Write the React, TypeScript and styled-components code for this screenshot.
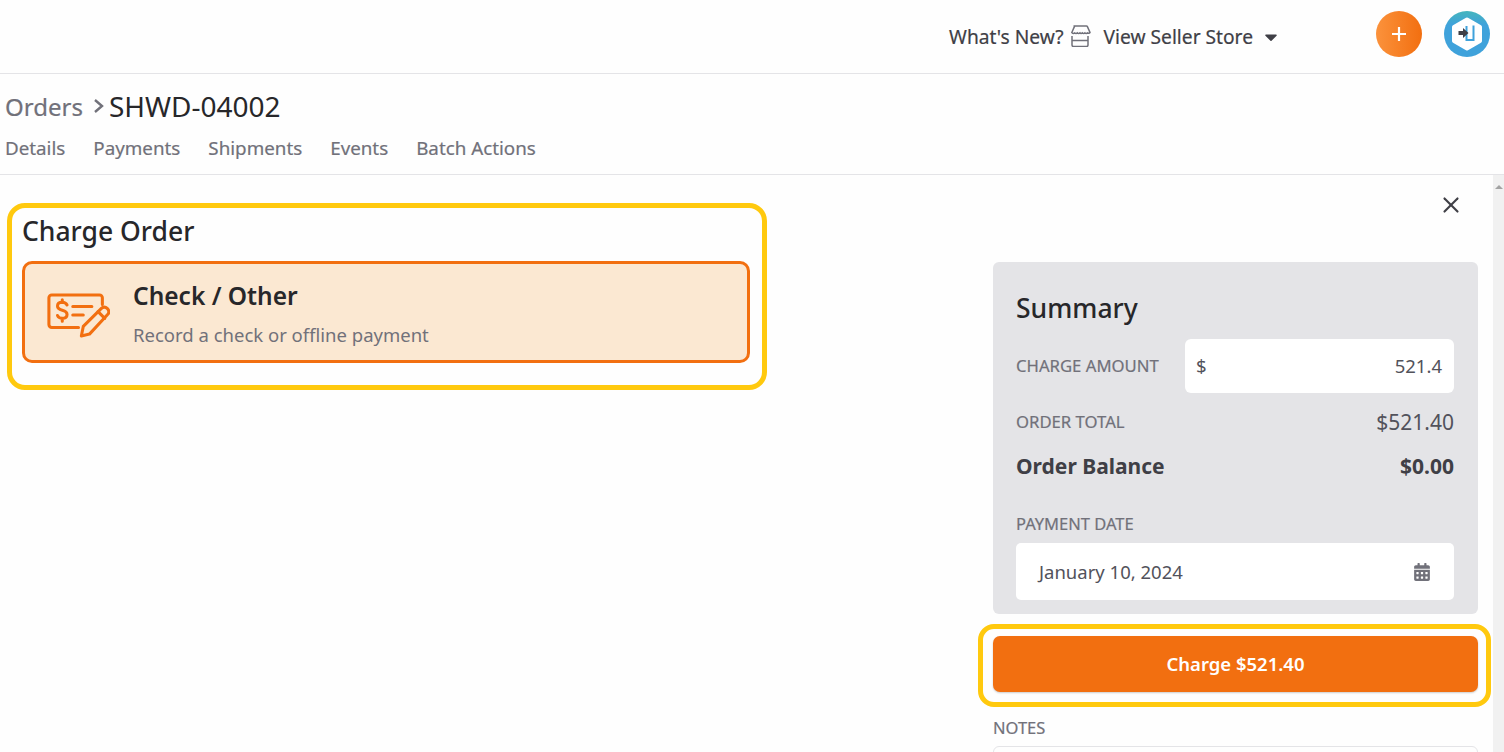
import { FaCalendarAlt, FaCaretDown } from "react-icons/fa";
import { X } from "lucide-react";
import styled, { createGlobalStyle } from "styled-components";

const GlobalStyle = createGlobalStyle`
  html, body {
    margin: 0;
    height: 100%;
    overflow: hidden;
    background: #fefefe;
    font-family: "Noto Sans", "Open Sans", sans-serif;
    color: #3f3f46;
  }
  * { box-sizing: border-box; }
`;

function StoreIcon() {
  return (
    <svg width="22" height="22" viewBox="0 0 22 22" fill="none" stroke="#71717a" strokeWidth="1.500">
      <path d="M4.500 1h13a1 1 0 0 1 .9.600L21 7.500c-.6.800-1.600 1-2.400.4-.8.700-2 .7-2.600 0-.8.700-2 .7-2.600 0-.8.700-2 .7-2.400 0-.8.700-2 .7-2.600 0-.8.700-2 .7-2.600 0-.8.600-2.300.4-3-.4l2.600-5.900a1 1 0 0 1 .9-.600z" />
      <path d="M3 11v9a1.500 1.500 0 0 0 1.500 1.500h13A1.500 1.500 0 0 0 19 20v-9M3 15.500h16" />
    </svg>
  );
}

function Logo() {
  return (
    <svg width="46" height="46" viewBox="0 0 46 46">
      <defs>
        <linearGradient id="ring" x1="0" y1="0" x2="0" y2="1">
          <stop offset="0" stopColor="#45b5bd" />
          <stop offset="0.3" stopColor="#3fa2db" />
          <stop offset="1" stopColor="#3fa2db" />
        </linearGradient>
      </defs>
      <circle cx="23" cy="23" r="23" fill="url(#ring)" />
      <path d="M23 8.500l13 7.500v14l-13 7.500L10 30V16z" fill="#fff" stroke="#fff" strokeWidth="4" strokeLinejoin="round" />
      <path d="M22.500 15v14h7V14.500" fill="none" stroke="#3fa2db" strokeWidth="2" />
      <path d="M14.500 20h4.500v-3l5.500 5-5.500 5v-3h-4.500z" fill="#3f3f46" />
    </svg>
  );
}

function CheckIcon() {
  return (
    <svg width="63" height="46" viewBox="0 0 66 48" fill="none" stroke="#f26f10" strokeWidth="3.200" strokeLinecap="round" strokeLinejoin="round">
      <path d="M33 37H5a3 3 0 0 1-3-3V6a3 3 0 0 1 3-3h50a3 3 0 0 1 3 3v7" />
      <path d="M21 13.500c-1-2-2.800-2.800-5-2.800-3 0-5 1.600-5 4s2 3.600 5 4.300 5 2 5 4.500-2 4-5 4c-2.400 0-4.200-1-5-3M16 8v3M16 27.500v3" />
      <path d="M27 15h20M27 24h11" />
      <path d="M36 46l2-10 19-19a4.200 4.200 0 0 1 6 0l.5.5a4.200 4.200 0 0 1 0 6L44.500 44z" />
      <path d="M53.500 20.500l7 7" />
    </svg>
  );
}

export default function App() {
  return (
    <Page>
      <GlobalStyle />
      <TopBar>
        <TopLink>What's New?</TopLink>
        <StoreSlot><StoreIcon /></StoreSlot>
        <TopLink>View Seller Store</TopLink>
        <Caret><FaCaretDown size={20} /></Caret>
        <AddButton>
          <svg width="16" height="16" viewBox="0 0 16 16" stroke="#fff" strokeWidth="2.200">
            <path d="M8 1v14M1 8h14" />
          </svg>
        </AddButton>
        <LogoSlot><Logo /></LogoSlot>
      </TopBar>
      <SubHeader>
        <Crumbs>
          <CrumbLink>Orders</CrumbLink>
          <svg width="14" height="16" viewBox="0 0 14 16" fill="none" stroke="#71717a" strokeWidth="2.400">
            <path d="M3 2l7 6-7 6" />
          </svg>
          <CrumbCurrent>SHWD-04002</CrumbCurrent>
        </Crumbs>
        <Tabs>
          <Tab>Details</Tab>
          <Tab>Payments</Tab>
          <Tab>Shipments</Tab>
          <Tab>Events</Tab>
          <Tab>Batch Actions</Tab>
        </Tabs>
      </SubHeader>
      <Body>
        <Main>
          <LeftColumn>
            <Highlight>
              <ChargeTitle>Charge Order</ChargeTitle>
              <MethodCard>
                <CheckIcon />
                <div>
                  <MethodName>Check / Other</MethodName>
                  <MethodHint>Record a check or offline payment</MethodHint>
                </div>
              </MethodCard>
            </Highlight>
          </LeftColumn>
          <RightColumn>
            <CloseRow><X size={26} strokeWidth={2} color="#3f3f46" /></CloseRow>
            <Summary>
              <SummaryTitle>Summary</SummaryTitle>
              <AmountRow>
                <FieldLabel>CHARGE AMOUNT</FieldLabel>
                <AmountInput>
                  <span>$</span>
                  <span>521.4</span>
                </AmountInput>
              </AmountRow>
              <TotalRow>
                <FieldLabel>ORDER TOTAL</FieldLabel>
                <TotalValue>$521.40</TotalValue>
              </TotalRow>
              <BalanceRow>
                <span>Order Balance</span>
                <span>$0.00</span>
              </BalanceRow>
              <DateLabel>PAYMENT DATE</DateLabel>
              <DateInput>
                <span>January 10, 2024</span>
                <FaCalendarAlt size={18} color="#71717a" />
              </DateInput>
            </Summary>
            <ChargeButton>Charge $521.40</ChargeButton>
            <NotesLabel>NOTES</NotesLabel>
            <NotesBox />
          </RightColumn>
        </Main>
        <Scrollbar>
          <ScrollArrow />
        </Scrollbar>
      </Body>
    </Page>
  );
}

const Page = styled.div`
  height: 752px;
  display: flex;
  flex-direction: column;
  overflow: hidden;
`;

const TopBar = styled.header`
  height: 74px;
  flex: none;
  display: flex;
  align-items: center;
  justify-content: flex-end;
  padding: 0 14px 0 0;
  border-bottom: 1px solid #e4e4e7;
`;

const TopLink = styled.span`
  font-size: 19.200px;
  color: #3f3f46;
  -webkit-text-stroke: 0.2px #3f3f46;
`;

const StoreSlot = styled.span`
  display: flex;
  margin: -2px 13px 0 5px;
`;

const Caret = styled.span`
  display: flex;
  margin-left: 8px;
  margin-right: 95px;
  color: #3f3f46;
`;

const AddButton = styled.button`
  width: 46px;
  height: 46px;
  border: 0;
  padding: 0;
  border-radius: 50%;
  display: flex;
  align-items: center;
  justify-content: center;
  margin: -6px 22px 0 0;
  background: linear-gradient(90deg, #fb923c, #f26f10);
`;

const LogoSlot = styled.span`
  display: flex;
  margin-top: -6px;
`;

const SubHeader = styled.div`
  height: 101px;
  flex: none;
  padding: 14px 0 0 5px;
  border-bottom: 1px solid #e4e4e7;
`;

const Crumbs = styled.div`
  display: flex;
  align-items: center;
  height: 36px;
`;

const CrumbLink = styled.span`
  font-size: 24px;
  color: #71717a;
  margin-right: 9px;
  -webkit-text-stroke: 0.2px #71717a;
`;

const CrumbCurrent = styled.span`
  font-size: 28px;
  color: #27272a;
  margin-left: 3px;
`;

const Tabs = styled.nav`
  display: flex;
  gap: 28px;
  margin-top: 11px;
`;

const Tab = styled.span`
  font-size: 18.800px;
  color: #71717a;
  -webkit-text-stroke: 0.2px #71717a;
`;

const Body = styled.div`
  flex: 1;
  min-height: 0;
  display: flex;
`;

const Main = styled.main`
  flex: 1;
  display: flex;
  justify-content: space-between;
  padding: 0 15px 0 7px;
`;

const LeftColumn = styled.div`
  width: 760px;
  padding-top: 28px;
`;

const Highlight = styled.section`
  height: 187px;
  border: 5px solid #ffc90e;
  border-radius: 18px;
  padding: 4px 12px 0 10px;
`;

const ChargeTitle = styled.h2`
  margin: 0 0 11px;
  font-size: 26.500px;
  line-height: 38px;
  font-weight: 500;
  color: #27272a;
`;

const MethodCard = styled.div`
  height: 102px;
  display: flex;
  align-items: center;
  gap: 23px;
  padding: 0 0 0 22px;
  border: 3px solid #f26f10;
  border-radius: 10px;
  background: #fbe8d2;

  svg {
    margin-top: 6px;
  }
`;

const MethodName = styled.div`
  font-size: 24.500px;
  line-height: 32px;
  font-weight: 600;
  color: #27272a;
  margin-top: 3px;
`;

const MethodHint = styled.div`
  font-size: 18.500px;
  line-height: 26px;
  margin-top: 10px;
  color: #71717a;
`;

const RightColumn = styled.div`
  width: 485px;
  display: flex;
  flex-direction: column;
`;

const CloseRow = styled.div`
  height: 87px;
  flex: none;
  display: flex;
  justify-content: flex-end;
  padding: 17px 14px 0 0;
`;

const Summary = styled.section`
  height: 352px;
  flex: none;
  padding: 24px 24px 0 23px;
  background: #e4e4e7;
  border-radius: 6px;
`;

const SummaryTitle = styled.h3`
  margin: 0;
  font-size: 26.500px;
  line-height: 44px;
  font-weight: 500;
  color: #27272a;
`;

const AmountRow = styled.div`
  display: flex;
  align-items: center;
  justify-content: space-between;
  margin-top: 9px;
`;

const FieldLabel = styled.span`
  font-size: 16.700px;
  padding-bottom: 2px;
  color: #71717a;
  -webkit-text-stroke: 0.2px #71717a;
`;

const AmountInput = styled.div`
  width: 269px;
  height: 54px;
  display: flex;
  align-items: center;
  justify-content: space-between;
  padding: 0 12px 2px 11px;
  background: #fff;
  border-radius: 6px;
  font-size: 18.500px;
  color: #52525b;
`;

const TotalRow = styled.div`
  display: flex;
  align-items: center;
  justify-content: space-between;
  margin-top: 11px;
  height: 36px;
`;

const TotalValue = styled.span`
  font-size: 21px;
  color: #52525b;
`;

const BalanceRow = styled.div`
  display: flex;
  align-items: center;
  justify-content: space-between;
  margin-top: 8px;
  height: 36px;
  font-size: 21px;
  font-weight: 700;
  color: #3f3f46;
`;

const DateLabel = styled.div`
  margin-top: 28px;
  font-size: 16.500px;
  line-height: 24px;
  color: #71717a;
  -webkit-text-stroke: 0.2px #71717a;
`;

const DateInput = styled.div`
  height: 57px;
  margin-top: 7px;
  display: flex;
  align-items: center;
  justify-content: space-between;
  padding: 0 23px 0 23px;
  background: #fff;
  border-radius: 5px;
  font-size: 18.500px;
  color: #52525b;
`;

const ChargeButton = styled.button`
  position: relative;
  height: 56px;
  margin-top: 22px;
  padding: 0 0 2px;
  flex: none;
  border: 0;
  border-radius: 7px;
  background: #f26f10;
  box-shadow: 0 1px 2px rgba(0, 0, 0, 0.2);
  color: #fff;
  font-family: inherit;
  font-size: 18.500px;
  font-weight: 600;

  &::after {
    content: "";
    position: absolute;
    inset: -12px -13px -15px -15px;
    border: 5px solid #ffc90e;
    border-radius: 16px;
  }
`;

const NotesLabel = styled.div`
  margin-top: 24px;
  font-size: 16.500px;
  line-height: 24px;
  color: #71717a;
  -webkit-text-stroke: 0.2px #71717a;
`;

const NotesBox = styled.div`
  height: 60px;
  margin-top: 6px;
  flex: none;
  border: 1px solid #e4e4e7;
  border-radius: 6px;
`;

const Scrollbar = styled.div`
  width: 11px;
  flex: none;
  background: #f1f1f1;
  display: flex;
  justify-content: center;
  align-items: flex-start;
  padding-top: 10px;
`;

const ScrollArrow = styled.span`
  width: 0;
  height: 0;
  border-left: 4px solid transparent;
  border-right: 4px solid transparent;
  border-bottom: 4px solid #a3a3a3;
`;
